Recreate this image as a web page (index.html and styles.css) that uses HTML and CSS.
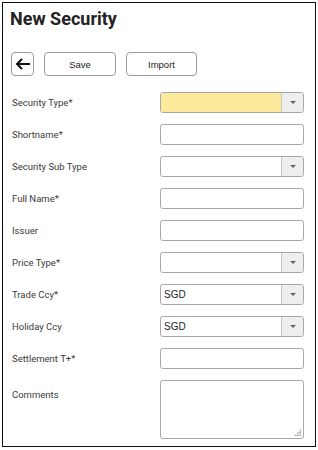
FILE: index.html
```html
<!DOCTYPE html>
<html lang="en">
<head>
  <meta charset="UTF-8" />
  <title>New Security</title>
  <meta name="viewport" content="width=device-width, initial-scale=1.0" />
  <link rel="stylesheet" href="styles.css">
</head>
<body>
  <div class="page">
    <h1 class="title">New Security</h1>

    <div class="toolbar">
      <button class="btn btn-back" title="Back">
        <svg width="16" height="12" viewBox="0 0 16 12">
          <path d="M15 6H2M7 1L2 6l5 5" fill="none" stroke="#111" stroke-width="2"/>
        </svg>
      </button>
      <button class="btn btn-text">Save</button>
      <button class="btn btn-text btn-import">Import</button>
    </div>

    <div class="form">
      <div class="row">
        <label>Security Type*</label>
        <div class="combo required"><span class="value"></span><span class="caret"></span></div>
      </div>
      <div class="row">
        <label>Shortname*</label>
        <input type="text" class="field" />
      </div>
      <div class="row">
        <label>Security Sub Type</label>
        <div class="combo"><span class="value"></span><span class="caret"></span></div>
      </div>
      <div class="row">
        <label>Full Name*</label>
        <input type="text" class="field" />
      </div>
      <div class="row">
        <label>Issuer</label>
        <input type="text" class="field" />
      </div>
      <div class="row">
        <label>Price Type*</label>
        <div class="combo"><span class="value"></span><span class="caret"></span></div>
      </div>
      <div class="row">
        <label>Trade Ccy*</label>
        <div class="combo"><span class="value">SGD</span><span class="caret"></span></div>
      </div>
      <div class="row">
        <label>Holiday Ccy</label>
        <div class="combo"><span class="value">SGD</span><span class="caret"></span></div>
      </div>
      <div class="row">
        <label>Settlement T+*</label>
        <input type="text" class="field" />
      </div>
      <div class="row row-top">
        <label>Comments</label>
        <div class="notes-wrap">
          <textarea class="field notes"></textarea>
          <span class="grip"></span>
        </div>
      </div>
    </div>
  </div>
</body>
</html>
```

FILE: styles.css
```css
* {
  box-sizing: border-box;
}

body {
  margin: 0;
  padding: 2px;
  font-family: Roboto, "Liberation Sans", sans-serif;
  background: #fff;
  color: #333;
}

.page {
  width: 314px;
  height: 445px;
  border: 1px solid #111;
  padding: 0 10px 0 7px;
}

.title {
  margin: 5px 0 0 0;
  font-size: 18px;
  line-height: 22px;
  font-weight: bold;
  color: #222;
}

.toolbar {
  display: flex;
  margin-top: 22px;
  height: 24px;
}

.btn {
  height: 24px;
  border: 1px solid #9a9a9a;
  border-radius: 4px;
  background: #fff;
  font-family: "Liberation Sans", Arial, sans-serif;
  font-size: 9.5px;
  color: #222;
  padding: 0;
  cursor: pointer;
}

.btn-back {
  width: 23px;
  margin-left: 1px;
  display: flex;
  align-items: center;
  justify-content: center;
}

.btn-text {
  width: 72px;
  margin-left: 10px;
}

.btn-import {
  width: 71px;
}

.form {
  margin-top: 16px;
  display: flex;
  flex-direction: column;
  gap: 11px;
}

.row {
  display: flex;
  align-items: center;
  height: 21px;
}

.row-top {
  align-items: flex-start;
  height: 59px;
}

.row-top label {
  margin-top: 9px;
}

.row label {
  width: 150px;
  padding-left: 2px;
  font-size: 9.5px;
  color: #3a3a3a;
}

.field {
  width: 144px;
  height: 21px;
  border: 1px solid #a8a8a8;
  border-radius: 3px;
  background: #fff;
  margin: 0;
  outline: none;
}

.notes-wrap {
  position: relative;
  width: 144px;
  height: 59px;
}

.notes {
  height: 59px;
  resize: none;
  display: block;
}

.grip {
  position: absolute;
  right: 3px;
  bottom: 3px;
  width: 7px;
  height: 7px;
  background:
    radial-gradient(circle, #999 0.8px, transparent 1px) 0 0 / 2.5px 2.5px;
  clip-path: polygon(100% 0, 100% 100%, 0 100%);
}

.combo {
  width: 144px;
  height: 21px;
  border: 1px solid #a8a8a8;
  border-radius: 3px;
  display: flex;
  overflow: hidden;
  background: #fff;
}

.combo.required .value {
  background: #fde99c;
}

.combo .value {
  flex: 1;
  padding-left: 3px;
  font-family: "Liberation Sans", Arial, sans-serif;
  font-size: 10px;
  line-height: 19px;
  color: #222;
}

.combo .caret {
  width: 22px;
  border-left: 1px solid #c4c4c4;
  background: #eeeeee;
  display: flex;
  align-items: center;
  justify-content: center;
}

.combo .caret::after {
  content: "";
  border-left: 3px solid transparent;
  border-right: 3px solid transparent;
  border-top: 3px solid #666;
}
```
